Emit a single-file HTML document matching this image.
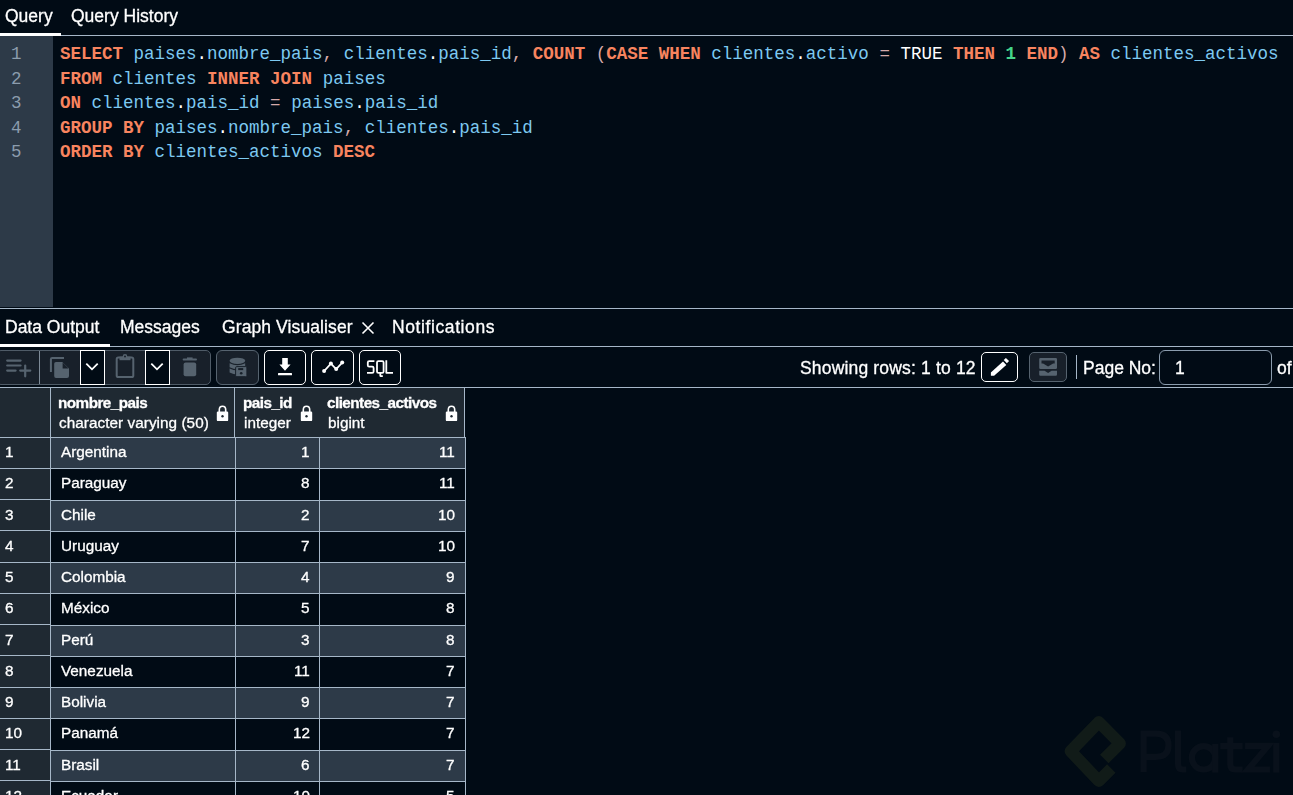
<!DOCTYPE html>
<html><head><meta charset="utf-8"><style>
html,body{margin:0;padding:0;}
body{width:1293px;height:795px;overflow:hidden;background:#010B15;position:relative;font-family:'Liberation Sans', sans-serif;}
b{font-weight:700;}
</style></head><body>
<div style="position:absolute;left:5px;top:5.44px;font-family:'Liberation Sans', sans-serif;font-size:17.5px;line-height:23px;color:#fff;font-weight:400;white-space:pre;-webkit-text-stroke:0.3px #fff;will-change:transform;">Query</div>
<div style="position:absolute;left:71px;top:5.44px;font-family:'Liberation Sans', sans-serif;font-size:17.5px;line-height:23px;color:#fff;font-weight:400;white-space:pre;-webkit-text-stroke:0.3px #fff;will-change:transform;">Query History</div>
<div style="position:absolute;left:0px;top:35px;width:1293px;height:1px;background:#A6B7C8;"></div>
<div style="position:absolute;left:0px;top:33px;width:61px;height:3px;background:#fff;"></div>
<div style="position:absolute;left:0px;top:36px;width:53px;height:271px;background:#2D3A48;"></div>
<div style="position:absolute;left:11px;top:43.34px;font-family:'Liberation Mono', monospace;font-size:17.5px;line-height:23px;color:#8B9CAD;font-weight:400;white-space:pre;">1</div>
<div style="position:absolute;left:60px;top:43.34px;font-family:'Liberation Mono', monospace;font-size:17.5px;line-height:23px;color:#7DC9F1;font-weight:400;white-space:pre;"><b style="color:#F8845F">SELECT</b> <span style="color:#7DC9F1">paises</span><span style="color:#ffffff">.</span><span style="color:#7DC9F1">nombre_pais</span><span style="color:#d6aaaa">,</span> <span style="color:#7DC9F1">clientes</span><span style="color:#ffffff">.</span><span style="color:#7DC9F1">pais_id</span><span style="color:#d6aaaa">,</span> <b style="color:#F8845F">COUNT</b> <span style="color:#d6aaaa">(</span><b style="color:#F8845F">CASE</b> <b style="color:#F8845F">WHEN</b> <span style="color:#7DC9F1">clientes</span><span style="color:#ffffff">.</span><span style="color:#7DC9F1">activo</span> <span style="color:#d6aaaa">=</span> <span style="color:#ffffff">TRUE</span> <b style="color:#F8845F">THEN</b> <b style="color:#45D48A">1</b> <b style="color:#F8845F">END</b><span style="color:#d6aaaa">)</span> <b style="color:#F8845F">AS</b> <span style="color:#7DC9F1">clientes_activos</span></div>
<div style="position:absolute;left:11px;top:67.84px;font-family:'Liberation Mono', monospace;font-size:17.5px;line-height:23px;color:#8B9CAD;font-weight:400;white-space:pre;">2</div>
<div style="position:absolute;left:60px;top:67.84px;font-family:'Liberation Mono', monospace;font-size:17.5px;line-height:23px;color:#7DC9F1;font-weight:400;white-space:pre;"><b style="color:#F8845F">FROM</b> <span style="color:#7DC9F1">clientes</span> <b style="color:#F8845F">INNER</b> <b style="color:#F8845F">JOIN</b> <span style="color:#7DC9F1">paises</span></div>
<div style="position:absolute;left:11px;top:92.34px;font-family:'Liberation Mono', monospace;font-size:17.5px;line-height:23px;color:#8B9CAD;font-weight:400;white-space:pre;">3</div>
<div style="position:absolute;left:60px;top:92.34px;font-family:'Liberation Mono', monospace;font-size:17.5px;line-height:23px;color:#7DC9F1;font-weight:400;white-space:pre;"><b style="color:#F8845F">ON</b> <span style="color:#7DC9F1">clientes</span><span style="color:#ffffff">.</span><span style="color:#7DC9F1">pais_id</span> <span style="color:#d6aaaa">=</span> <span style="color:#7DC9F1">paises</span><span style="color:#ffffff">.</span><span style="color:#7DC9F1">pais_id</span></div>
<div style="position:absolute;left:11px;top:116.84px;font-family:'Liberation Mono', monospace;font-size:17.5px;line-height:23px;color:#8B9CAD;font-weight:400;white-space:pre;">4</div>
<div style="position:absolute;left:60px;top:116.84px;font-family:'Liberation Mono', monospace;font-size:17.5px;line-height:23px;color:#7DC9F1;font-weight:400;white-space:pre;"><b style="color:#F8845F">GROUP</b> <b style="color:#F8845F">BY</b> <span style="color:#7DC9F1">paises</span><span style="color:#ffffff">.</span><span style="color:#7DC9F1">nombre_pais</span><span style="color:#d6aaaa">,</span> <span style="color:#7DC9F1">clientes</span><span style="color:#ffffff">.</span><span style="color:#7DC9F1">pais_id</span></div>
<div style="position:absolute;left:11px;top:141.34px;font-family:'Liberation Mono', monospace;font-size:17.5px;line-height:23px;color:#8B9CAD;font-weight:400;white-space:pre;">5</div>
<div style="position:absolute;left:60px;top:141.34px;font-family:'Liberation Mono', monospace;font-size:17.5px;line-height:23px;color:#7DC9F1;font-weight:400;white-space:pre;"><b style="color:#F8845F">ORDER</b> <b style="color:#F8845F">BY</b> <span style="color:#7DC9F1">clientes_activos</span> <b style="color:#F8845F">DESC</b></div>
<div style="position:absolute;left:0px;top:308px;width:1293px;height:1px;background:#A6B7C8;"></div>
<div style="position:absolute;left:5px;top:316.44px;font-family:'Liberation Sans', sans-serif;font-size:17.5px;line-height:23px;color:#fff;font-weight:400;white-space:pre;-webkit-text-stroke:0.3px #fff;will-change:transform;">Data Output</div>
<div style="position:absolute;left:120px;top:316.44px;font-family:'Liberation Sans', sans-serif;font-size:17.5px;line-height:23px;color:#fff;font-weight:400;white-space:pre;-webkit-text-stroke:0.3px #fff;will-change:transform;">Messages</div>
<div style="position:absolute;left:222px;top:316.44px;font-family:'Liberation Sans', sans-serif;font-size:17.5px;line-height:23px;color:#fff;font-weight:400;white-space:pre;-webkit-text-stroke:0.3px #fff;will-change:transform;letter-spacing:0.1px;">Graph Visualiser</div>
<div style="position:absolute;left:392px;top:316.44px;font-family:'Liberation Sans', sans-serif;font-size:17.5px;line-height:23px;color:#fff;font-weight:400;white-space:pre;-webkit-text-stroke:0.3px #fff;will-change:transform;letter-spacing:0.6px;">Notifications</div>
<svg style="position:absolute;left:361px;top:320.5px" width="14" height="14" viewBox="0 0 14 14"><path d="M1.5 1.5L12.5 12.5M12.5 1.5L1.5 12.5" stroke="#fff" stroke-width="1.6"/></svg>
<div style="position:absolute;left:0px;top:346px;width:1293px;height:1px;background:#A6B7C8;"></div>
<div style="position:absolute;left:0px;top:344px;width:110px;height:2.5px;background:#fff;"></div>
<div style="position:absolute;left:-4px;top:350px;width:215px;height:35px;background:#18202a;box-sizing:border-box;border:1px solid #4f5b67;border-radius:5px;"></div>
<div style="position:absolute;left:39px;top:351px;width:1px;height:33px;background:#7d8a97;"></div>
<div style="position:absolute;left:80px;top:350px;width:25px;height:35px;background:#010B15;box-sizing:border-box;border:1px solid #fff;"></div>
<div style="position:absolute;left:145px;top:350px;width:25px;height:35px;background:#010B15;box-sizing:border-box;border:1px solid #fff;"></div>
<svg style="position:absolute;left:84px;top:360px" width="16" height="14" viewBox="0 0 16 14"><path d="M2.3 3.6L8 9.3L13.7 3.6" fill="none" stroke="#fff" stroke-width="1.8"/></svg>
<svg style="position:absolute;left:149px;top:360px" width="16" height="14" viewBox="0 0 16 14"><path d="M2.3 3.6L8 9.3L13.7 3.6" fill="none" stroke="#fff" stroke-width="1.8"/></svg>
<svg style="position:absolute;left:0px;top:348px" width="40" height="40" viewBox="0 0 40 40"><g stroke="#56636f" stroke-width="2.2" stroke-linecap="round"><path d="M7.2 12.6H20.6M7.2 17.5H20.6M7.2 22.6H15.6M20.2 22.6H30.3M25.2 17.5V28.3"/></g></svg>
<svg style="position:absolute;left:40px;top:348px" width="40" height="40" viewBox="0 0 40 40"><path d="M10.9 24V11.3Q10.9 10 12.2 10H24" fill="none" stroke="#56636f" stroke-width="2"/><path d="M14.2 15.8Q14.2 14 16 14H22.3L29 20.6V28Q29 30 27 30H16Q14.2 30 14.2 28Z" fill="#56636f"/><path d="M22.6 14.4V20.5H28.6Z" fill="#18202a"/></svg>
<svg style="position:absolute;left:105px;top:348px" width="40" height="40" viewBox="0 0 40 40"><rect x="11.7" y="9.6" width="16.6" height="19.4" rx="1.6" fill="none" stroke="#56636f" stroke-width="2"/><rect x="14.5" y="8.6" width="11" height="3.6" fill="#56636f"/><circle cx="20" cy="8.4" r="2.3" fill="#56636f"/><circle cx="20" cy="8.4" r="1" fill="#18202a"/></svg>
<svg style="position:absolute;left:170px;top:348px" width="40" height="40" viewBox="0 0 40 40"><rect x="12.7" y="10.5" width="14.2" height="2" rx="0.8" fill="#56636f"/><rect x="17" y="9.4" width="5.6" height="2" fill="#56636f"/><rect x="13.6" y="14.4" width="12.6" height="13.8" rx="2" fill="#56636f"/></svg>
<div style="position:absolute;left:216px;top:350px;width:43px;height:35px;background:#18202a;box-sizing:border-box;border:1px solid #56636f;border-radius:6px;"></div>
<svg style="position:absolute;left:215px;top:348px" width="45" height="40" viewBox="0 0 45 40"><g fill="#56636f"><ellipse cx="22.4" cy="12.8" rx="7.8" ry="3.1"/><path d="M14.6 15.3Q22.4 19.3 30.2 15.3V19.2Q22.4 23.2 14.6 19.2Z"/><path d="M14.6 20.4Q22.4 24.4 30.2 20.4V24.6Q22.4 28.6 14.6 24.6Z"/></g><rect x="20.6" y="18.6" width="11.3" height="10.1" rx="1.2" fill="#56636f" stroke="#18202a" stroke-width="1"/><rect x="23.2" y="20.1" width="5" height="2" fill="#18202a"/><circle cx="26.2" cy="25.2" r="1.3" fill="#18202a"/></svg>
<div style="position:absolute;left:264px;top:350px;width:42px;height:35px;background:#010B15;box-sizing:border-box;border:1.2px solid #fff;border-radius:5px;"></div>
<svg style="position:absolute;left:260px;top:348px" width="50" height="40" viewBox="0 0 50 40"><path d="M22.2 10H27.8V16.6H30.6L25 22.8L19.4 16.6H22.2Z" fill="#fff"/><rect x="18" y="24.9" width="14" height="2.3" rx="0.5" fill="#fff"/></svg>
<div style="position:absolute;left:311px;top:350px;width:43px;height:35px;background:#010B15;box-sizing:border-box;border:1.2px solid #fff;border-radius:5px;"></div>
<svg style="position:absolute;left:308px;top:348px" width="50" height="40" viewBox="0 0 50 40"><path d="M16.1 23.1L22.9 15.6L28.2 21.1L34.2 14.6" fill="none" stroke="#fff" stroke-width="1.7" stroke-linejoin="round"/><circle cx="16.1" cy="23.1" r="2" fill="#fff"/><circle cx="22.9" cy="15.6" r="2" fill="#fff"/><circle cx="28.2" cy="21.1" r="2" fill="#fff"/><circle cx="34.2" cy="14.6" r="2" fill="#fff"/></svg>
<div style="position:absolute;left:359px;top:350px;width:42px;height:35px;background:#010B15;box-sizing:border-box;border:1.2px solid #fff;border-radius:5px;"></div>
<svg style="position:absolute;left:355px;top:348px" width="50" height="40" viewBox="0 0 50 40"><g fill="none" stroke="#fff" stroke-width="1.8" stroke-linejoin="round"><path d="M19.4 13.2H14.2Q12.8 13.2 12.8 14.6V17.2Q12.8 18.6 14.2 18.6H17.2Q18.6 18.6 18.6 20V23.4Q18.6 24.8 17.2 24.8H12"/><path d="M23.4 13.2H27.2Q28.6 13.2 28.6 14.6V23.4Q28.6 24.8 27.2 24.8H23.4Q22 24.8 22 23.4V14.6Q22 13.2 23.4 13.2Z"/><path d="M25.3 24.8V27.6Q25.3 28.2 25.9 28.2H27.8"/><path d="M31.3 12.2V24.8H38"/></g></svg>
<div style="position:absolute;left:800px;top:357.04px;font-family:'Liberation Sans', sans-serif;font-size:17.5px;line-height:23px;color:#fff;font-weight:400;white-space:pre;-webkit-text-stroke:0.3px #fff;will-change:transform;letter-spacing:0.17px;">Showing rows: 1 to 12</div>
<div style="position:absolute;left:981px;top:352px;width:37px;height:30px;background:#010B15;box-sizing:border-box;border:1.2px solid #fff;border-radius:5px;"></div>
<svg style="position:absolute;left:975px;top:348px" width="50" height="40" viewBox="0 0 50 40"><path d="M15.85 24.4L28.0 13.6L31.3 16.9L19.1 27.7H15.85Z" fill="#fff"/><path d="M30.9 9.9L34.1 13.1L31.9 15.3L28.7 12.1Z" fill="#fff"/></svg>
<div style="position:absolute;left:1029px;top:352px;width:38px;height:30px;background:#18202a;box-sizing:border-box;border:1px solid #56636f;border-radius:5px;"></div>
<svg style="position:absolute;left:1037px;top:356px" width="22" height="22" viewBox="0 0 22 22"><path d="M3.4 2H18.8Q20 2 20 3.2V11.7Q20 12.9 18.8 12.9H3.4Q2.2 12.9 2.2 11.7V3.2Q2.2 2 3.4 2Z M4.5 4.4V7.5H6.1L11.1 10.6L16.1 7.5H17.7V4.4Z" fill="#56636f" fill-rule="evenodd"/><path d="M2.2 14.8H7.6L11.1 17.1L14.6 14.8H20V18.6Q20 19.8 18.8 19.8H3.4Q2.2 19.8 2.2 18.6Z" fill="#56636f"/></svg>
<div style="position:absolute;left:1076px;top:355px;width:1px;height:24px;background:#A6B7C8;"></div>
<div style="position:absolute;left:1083px;top:357.04px;font-family:'Liberation Sans', sans-serif;font-size:17.5px;line-height:23px;color:#fff;font-weight:400;white-space:pre;-webkit-text-stroke:0.3px #fff;will-change:transform;">Page No:</div>
<div style="position:absolute;left:1159px;top:350px;width:113px;height:35px;background:#010B15;box-sizing:border-box;border:1px solid #8B9CAD;border-radius:6px;"></div>
<div style="position:absolute;left:1175px;top:357.04px;font-family:'Liberation Sans', sans-serif;font-size:17.5px;line-height:23px;color:#fff;font-weight:400;white-space:pre;-webkit-text-stroke:0.3px #fff;will-change:transform;">1</div>
<div style="position:absolute;left:1277px;top:357.04px;font-family:'Liberation Sans', sans-serif;font-size:17.5px;line-height:23px;color:#fff;font-weight:400;white-space:pre;-webkit-text-stroke:0.3px #fff;will-change:transform;">of</div>
<div style="position:absolute;left:0px;top:387px;width:1293px;height:1px;background:#A6B7C8;"></div>
<div style="position:absolute;left:0px;top:388px;width:465px;height:50px;background:#1F2932;"></div>
<div style="position:absolute;left:0px;top:437px;width:465px;height:1px;background:#A6B7C8;"></div>
<div style="position:absolute;left:50px;top:388px;width:1px;height:50px;background:#A6B7C8;"></div>
<div style="position:absolute;left:234px;top:388px;width:1px;height:50px;background:#A6B7C8;"></div>
<div style="position:absolute;left:464px;top:388px;width:1px;height:50px;background:#A6B7C8;"></div>
<div style="position:absolute;left:58px;top:393.20px;font-family:'Liberation Sans', sans-serif;font-size:15.3px;line-height:20px;color:#fff;font-weight:700;white-space:pre;-webkit-text-stroke:0.3px #fff;will-change:transform;letter-spacing:-0.55px;">nombre_pais</div>
<div style="position:absolute;left:59px;top:412.70px;font-family:'Liberation Sans', sans-serif;font-size:15.3px;line-height:20px;color:#fff;font-weight:400;white-space:pre;-webkit-text-stroke:0.3px #fff;will-change:transform;letter-spacing:0.05px;">character varying (50)</div>
<div style="position:absolute;left:243px;top:393.20px;font-family:'Liberation Sans', sans-serif;font-size:15.3px;line-height:20px;color:#fff;font-weight:700;white-space:pre;-webkit-text-stroke:0.3px #fff;will-change:transform;letter-spacing:-0.55px;">pais_id</div>
<div style="position:absolute;left:244px;top:412.70px;font-family:'Liberation Sans', sans-serif;font-size:15.3px;line-height:20px;color:#fff;font-weight:400;white-space:pre;-webkit-text-stroke:0.3px #fff;will-change:transform;">integer</div>
<div style="position:absolute;left:327px;top:393.20px;font-family:'Liberation Sans', sans-serif;font-size:15.3px;line-height:20px;color:#fff;font-weight:700;white-space:pre;-webkit-text-stroke:0.3px #fff;will-change:transform;letter-spacing:-0.55px;">clientes_activos</div>
<div style="position:absolute;left:328px;top:412.70px;font-family:'Liberation Sans', sans-serif;font-size:15.3px;line-height:20px;color:#fff;font-weight:400;white-space:pre;-webkit-text-stroke:0.3px #fff;will-change:transform;">bigint</div>
<svg style="position:absolute;left:215.5px;top:405px" width="13" height="17" viewBox="0 0 13 17"><path d="M3.3 7V4.8Q3.3 1.3 6.5 1.3Q9.7 1.3 9.7 4.8V7" fill="none" stroke="#fff" stroke-width="1.6"/><rect x="0.8" y="6.5" width="11.4" height="9.6" rx="1.2" fill="#fff"/><circle cx="6.5" cy="11.2" r="1.2" fill="#1F2932"/></svg>
<svg style="position:absolute;left:300px;top:405px" width="13" height="17" viewBox="0 0 13 17"><path d="M3.3 7V4.8Q3.3 1.3 6.5 1.3Q9.7 1.3 9.7 4.8V7" fill="none" stroke="#fff" stroke-width="1.6"/><rect x="0.8" y="6.5" width="11.4" height="9.6" rx="1.2" fill="#fff"/><circle cx="6.5" cy="11.2" r="1.2" fill="#1F2932"/></svg>
<svg style="position:absolute;left:444.5px;top:405px" width="13" height="17" viewBox="0 0 13 17"><path d="M3.3 7V4.8Q3.3 1.3 6.5 1.3Q9.7 1.3 9.7 4.8V7" fill="none" stroke="#fff" stroke-width="1.6"/><rect x="0.8" y="6.5" width="11.4" height="9.6" rx="1.2" fill="#fff"/><circle cx="6.5" cy="11.2" r="1.2" fill="#1F2932"/></svg>
<div style="position:absolute;left:0px;top:438px;width:50px;height:30px;background:#1F2932;"></div>
<div style="position:absolute;left:0px;top:468px;width:50px;height:1px;background:#A6B7C8;"></div>
<div style="position:absolute;left:51px;top:438px;width:414px;height:30px;background:#2D3A48;"></div>
<div style="position:absolute;left:51px;top:468px;width:415px;height:1px;background:#A6B7C8;"></div>
<div style="position:absolute;left:5px;top:441.90px;font-family:'Liberation Sans', sans-serif;font-size:15.3px;line-height:20px;color:#fff;font-weight:400;white-space:pre;-webkit-text-stroke:0.3px #fff;will-change:transform;">1</div>
<div style="position:absolute;left:61px;top:441.90px;font-family:'Liberation Sans', sans-serif;font-size:15.3px;line-height:20px;color:#fff;font-weight:400;white-space:pre;-webkit-text-stroke:0.3px #fff;will-change:transform;">Argentina</div>
<div style="position:absolute;right:983px;top:441.90px;font-family:'Liberation Sans', sans-serif;font-size:15.3px;line-height:20px;color:#fff;font-weight:400;white-space:pre;-webkit-text-stroke:0.3px #fff;will-change:transform;">1</div>
<div style="position:absolute;right:838px;top:441.90px;font-family:'Liberation Sans', sans-serif;font-size:15.3px;line-height:20px;color:#fff;font-weight:400;white-space:pre;-webkit-text-stroke:0.3px #fff;will-change:transform;">11</div>
<div style="position:absolute;left:0px;top:469px;width:50px;height:30px;background:#1F2932;"></div>
<div style="position:absolute;left:0px;top:499px;width:50px;height:1px;background:#A6B7C8;"></div>
<div style="position:absolute;left:51px;top:469px;width:414px;height:31px;background:#010B15;"></div>
<div style="position:absolute;left:51px;top:500px;width:415px;height:1px;background:#A6B7C8;"></div>
<div style="position:absolute;left:5px;top:472.90px;font-family:'Liberation Sans', sans-serif;font-size:15.3px;line-height:20px;color:#fff;font-weight:400;white-space:pre;-webkit-text-stroke:0.3px #fff;will-change:transform;">2</div>
<div style="position:absolute;left:61px;top:472.90px;font-family:'Liberation Sans', sans-serif;font-size:15.3px;line-height:20px;color:#fff;font-weight:400;white-space:pre;-webkit-text-stroke:0.3px #fff;will-change:transform;">Paraguay</div>
<div style="position:absolute;right:983px;top:472.90px;font-family:'Liberation Sans', sans-serif;font-size:15.3px;line-height:20px;color:#fff;font-weight:400;white-space:pre;-webkit-text-stroke:0.3px #fff;will-change:transform;">8</div>
<div style="position:absolute;right:838px;top:472.90px;font-family:'Liberation Sans', sans-serif;font-size:15.3px;line-height:20px;color:#fff;font-weight:400;white-space:pre;-webkit-text-stroke:0.3px #fff;will-change:transform;">11</div>
<div style="position:absolute;left:0px;top:500px;width:50px;height:30px;background:#1F2932;"></div>
<div style="position:absolute;left:0px;top:530px;width:50px;height:1px;background:#A6B7C8;"></div>
<div style="position:absolute;left:51px;top:501px;width:414px;height:30px;background:#2D3A48;"></div>
<div style="position:absolute;left:51px;top:531px;width:415px;height:1px;background:#A6B7C8;"></div>
<div style="position:absolute;left:5px;top:504.90px;font-family:'Liberation Sans', sans-serif;font-size:15.3px;line-height:20px;color:#fff;font-weight:400;white-space:pre;-webkit-text-stroke:0.3px #fff;will-change:transform;">3</div>
<div style="position:absolute;left:61px;top:504.90px;font-family:'Liberation Sans', sans-serif;font-size:15.3px;line-height:20px;color:#fff;font-weight:400;white-space:pre;-webkit-text-stroke:0.3px #fff;will-change:transform;">Chile</div>
<div style="position:absolute;right:983px;top:504.90px;font-family:'Liberation Sans', sans-serif;font-size:15.3px;line-height:20px;color:#fff;font-weight:400;white-space:pre;-webkit-text-stroke:0.3px #fff;will-change:transform;">2</div>
<div style="position:absolute;right:838px;top:504.90px;font-family:'Liberation Sans', sans-serif;font-size:15.3px;line-height:20px;color:#fff;font-weight:400;white-space:pre;-webkit-text-stroke:0.3px #fff;will-change:transform;">10</div>
<div style="position:absolute;left:0px;top:531px;width:50px;height:31px;background:#1F2932;"></div>
<div style="position:absolute;left:0px;top:562px;width:50px;height:1px;background:#A6B7C8;"></div>
<div style="position:absolute;left:51px;top:532px;width:414px;height:30px;background:#010B15;"></div>
<div style="position:absolute;left:51px;top:562px;width:415px;height:1px;background:#A6B7C8;"></div>
<div style="position:absolute;left:5px;top:535.90px;font-family:'Liberation Sans', sans-serif;font-size:15.3px;line-height:20px;color:#fff;font-weight:400;white-space:pre;-webkit-text-stroke:0.3px #fff;will-change:transform;">4</div>
<div style="position:absolute;left:61px;top:535.90px;font-family:'Liberation Sans', sans-serif;font-size:15.3px;line-height:20px;color:#fff;font-weight:400;white-space:pre;-webkit-text-stroke:0.3px #fff;will-change:transform;">Uruguay</div>
<div style="position:absolute;right:983px;top:535.90px;font-family:'Liberation Sans', sans-serif;font-size:15.3px;line-height:20px;color:#fff;font-weight:400;white-space:pre;-webkit-text-stroke:0.3px #fff;will-change:transform;">7</div>
<div style="position:absolute;right:838px;top:535.90px;font-family:'Liberation Sans', sans-serif;font-size:15.3px;line-height:20px;color:#fff;font-weight:400;white-space:pre;-webkit-text-stroke:0.3px #fff;will-change:transform;">10</div>
<div style="position:absolute;left:0px;top:563px;width:50px;height:30px;background:#1F2932;"></div>
<div style="position:absolute;left:0px;top:593px;width:50px;height:1px;background:#A6B7C8;"></div>
<div style="position:absolute;left:51px;top:563px;width:414px;height:30px;background:#2D3A48;"></div>
<div style="position:absolute;left:51px;top:593px;width:415px;height:1px;background:#A6B7C8;"></div>
<div style="position:absolute;left:5px;top:566.90px;font-family:'Liberation Sans', sans-serif;font-size:15.3px;line-height:20px;color:#fff;font-weight:400;white-space:pre;-webkit-text-stroke:0.3px #fff;will-change:transform;">5</div>
<div style="position:absolute;left:61px;top:566.90px;font-family:'Liberation Sans', sans-serif;font-size:15.3px;line-height:20px;color:#fff;font-weight:400;white-space:pre;-webkit-text-stroke:0.3px #fff;will-change:transform;">Colombia</div>
<div style="position:absolute;right:983px;top:566.90px;font-family:'Liberation Sans', sans-serif;font-size:15.3px;line-height:20px;color:#fff;font-weight:400;white-space:pre;-webkit-text-stroke:0.3px #fff;will-change:transform;">4</div>
<div style="position:absolute;right:838px;top:566.90px;font-family:'Liberation Sans', sans-serif;font-size:15.3px;line-height:20px;color:#fff;font-weight:400;white-space:pre;-webkit-text-stroke:0.3px #fff;will-change:transform;">9</div>
<div style="position:absolute;left:0px;top:594px;width:50px;height:30px;background:#1F2932;"></div>
<div style="position:absolute;left:0px;top:624px;width:50px;height:1px;background:#A6B7C8;"></div>
<div style="position:absolute;left:51px;top:594px;width:414px;height:31px;background:#010B15;"></div>
<div style="position:absolute;left:51px;top:625px;width:415px;height:1px;background:#A6B7C8;"></div>
<div style="position:absolute;left:5px;top:597.90px;font-family:'Liberation Sans', sans-serif;font-size:15.3px;line-height:20px;color:#fff;font-weight:400;white-space:pre;-webkit-text-stroke:0.3px #fff;will-change:transform;">6</div>
<div style="position:absolute;left:61px;top:597.90px;font-family:'Liberation Sans', sans-serif;font-size:15.3px;line-height:20px;color:#fff;font-weight:400;white-space:pre;-webkit-text-stroke:0.3px #fff;will-change:transform;">México</div>
<div style="position:absolute;right:983px;top:597.90px;font-family:'Liberation Sans', sans-serif;font-size:15.3px;line-height:20px;color:#fff;font-weight:400;white-space:pre;-webkit-text-stroke:0.3px #fff;will-change:transform;">5</div>
<div style="position:absolute;right:838px;top:597.90px;font-family:'Liberation Sans', sans-serif;font-size:15.3px;line-height:20px;color:#fff;font-weight:400;white-space:pre;-webkit-text-stroke:0.3px #fff;will-change:transform;">8</div>
<div style="position:absolute;left:0px;top:625px;width:50px;height:30px;background:#1F2932;"></div>
<div style="position:absolute;left:0px;top:655px;width:50px;height:1px;background:#A6B7C8;"></div>
<div style="position:absolute;left:51px;top:626px;width:414px;height:30px;background:#2D3A48;"></div>
<div style="position:absolute;left:51px;top:656px;width:415px;height:1px;background:#A6B7C8;"></div>
<div style="position:absolute;left:5px;top:629.90px;font-family:'Liberation Sans', sans-serif;font-size:15.3px;line-height:20px;color:#fff;font-weight:400;white-space:pre;-webkit-text-stroke:0.3px #fff;will-change:transform;">7</div>
<div style="position:absolute;left:61px;top:629.90px;font-family:'Liberation Sans', sans-serif;font-size:15.3px;line-height:20px;color:#fff;font-weight:400;white-space:pre;-webkit-text-stroke:0.3px #fff;will-change:transform;">Perú</div>
<div style="position:absolute;right:983px;top:629.90px;font-family:'Liberation Sans', sans-serif;font-size:15.3px;line-height:20px;color:#fff;font-weight:400;white-space:pre;-webkit-text-stroke:0.3px #fff;will-change:transform;">3</div>
<div style="position:absolute;right:838px;top:629.90px;font-family:'Liberation Sans', sans-serif;font-size:15.3px;line-height:20px;color:#fff;font-weight:400;white-space:pre;-webkit-text-stroke:0.3px #fff;will-change:transform;">8</div>
<div style="position:absolute;left:0px;top:656px;width:50px;height:31px;background:#1F2932;"></div>
<div style="position:absolute;left:0px;top:687px;width:50px;height:1px;background:#A6B7C8;"></div>
<div style="position:absolute;left:51px;top:657px;width:414px;height:30px;background:#010B15;"></div>
<div style="position:absolute;left:51px;top:687px;width:415px;height:1px;background:#A6B7C8;"></div>
<div style="position:absolute;left:5px;top:660.90px;font-family:'Liberation Sans', sans-serif;font-size:15.3px;line-height:20px;color:#fff;font-weight:400;white-space:pre;-webkit-text-stroke:0.3px #fff;will-change:transform;">8</div>
<div style="position:absolute;left:61px;top:660.90px;font-family:'Liberation Sans', sans-serif;font-size:15.3px;line-height:20px;color:#fff;font-weight:400;white-space:pre;-webkit-text-stroke:0.3px #fff;will-change:transform;">Venezuela</div>
<div style="position:absolute;right:983px;top:660.90px;font-family:'Liberation Sans', sans-serif;font-size:15.3px;line-height:20px;color:#fff;font-weight:400;white-space:pre;-webkit-text-stroke:0.3px #fff;will-change:transform;">11</div>
<div style="position:absolute;right:838px;top:660.90px;font-family:'Liberation Sans', sans-serif;font-size:15.3px;line-height:20px;color:#fff;font-weight:400;white-space:pre;-webkit-text-stroke:0.3px #fff;will-change:transform;">7</div>
<div style="position:absolute;left:0px;top:688px;width:50px;height:30px;background:#1F2932;"></div>
<div style="position:absolute;left:0px;top:718px;width:50px;height:1px;background:#A6B7C8;"></div>
<div style="position:absolute;left:51px;top:688px;width:414px;height:30px;background:#2D3A48;"></div>
<div style="position:absolute;left:51px;top:718px;width:415px;height:1px;background:#A6B7C8;"></div>
<div style="position:absolute;left:5px;top:691.90px;font-family:'Liberation Sans', sans-serif;font-size:15.3px;line-height:20px;color:#fff;font-weight:400;white-space:pre;-webkit-text-stroke:0.3px #fff;will-change:transform;">9</div>
<div style="position:absolute;left:61px;top:691.90px;font-family:'Liberation Sans', sans-serif;font-size:15.3px;line-height:20px;color:#fff;font-weight:400;white-space:pre;-webkit-text-stroke:0.3px #fff;will-change:transform;">Bolivia</div>
<div style="position:absolute;right:983px;top:691.90px;font-family:'Liberation Sans', sans-serif;font-size:15.3px;line-height:20px;color:#fff;font-weight:400;white-space:pre;-webkit-text-stroke:0.3px #fff;will-change:transform;">9</div>
<div style="position:absolute;right:838px;top:691.90px;font-family:'Liberation Sans', sans-serif;font-size:15.3px;line-height:20px;color:#fff;font-weight:400;white-space:pre;-webkit-text-stroke:0.3px #fff;will-change:transform;">7</div>
<div style="position:absolute;left:0px;top:719px;width:50px;height:30px;background:#1F2932;"></div>
<div style="position:absolute;left:0px;top:749px;width:50px;height:1px;background:#A6B7C8;"></div>
<div style="position:absolute;left:51px;top:719px;width:414px;height:31px;background:#010B15;"></div>
<div style="position:absolute;left:51px;top:750px;width:415px;height:1px;background:#A6B7C8;"></div>
<div style="position:absolute;left:5px;top:722.90px;font-family:'Liberation Sans', sans-serif;font-size:15.3px;line-height:20px;color:#fff;font-weight:400;white-space:pre;-webkit-text-stroke:0.3px #fff;will-change:transform;">10</div>
<div style="position:absolute;left:61px;top:722.90px;font-family:'Liberation Sans', sans-serif;font-size:15.3px;line-height:20px;color:#fff;font-weight:400;white-space:pre;-webkit-text-stroke:0.3px #fff;will-change:transform;">Panamá</div>
<div style="position:absolute;right:983px;top:722.90px;font-family:'Liberation Sans', sans-serif;font-size:15.3px;line-height:20px;color:#fff;font-weight:400;white-space:pre;-webkit-text-stroke:0.3px #fff;will-change:transform;">12</div>
<div style="position:absolute;right:838px;top:722.90px;font-family:'Liberation Sans', sans-serif;font-size:15.3px;line-height:20px;color:#fff;font-weight:400;white-space:pre;-webkit-text-stroke:0.3px #fff;will-change:transform;">7</div>
<div style="position:absolute;left:0px;top:750px;width:50px;height:30px;background:#1F2932;"></div>
<div style="position:absolute;left:0px;top:780px;width:50px;height:1px;background:#A6B7C8;"></div>
<div style="position:absolute;left:51px;top:751px;width:414px;height:30px;background:#2D3A48;"></div>
<div style="position:absolute;left:51px;top:781px;width:415px;height:1px;background:#A6B7C8;"></div>
<div style="position:absolute;left:5px;top:754.90px;font-family:'Liberation Sans', sans-serif;font-size:15.3px;line-height:20px;color:#fff;font-weight:400;white-space:pre;-webkit-text-stroke:0.3px #fff;will-change:transform;">11</div>
<div style="position:absolute;left:61px;top:754.90px;font-family:'Liberation Sans', sans-serif;font-size:15.3px;line-height:20px;color:#fff;font-weight:400;white-space:pre;-webkit-text-stroke:0.3px #fff;will-change:transform;">Brasil</div>
<div style="position:absolute;right:983px;top:754.90px;font-family:'Liberation Sans', sans-serif;font-size:15.3px;line-height:20px;color:#fff;font-weight:400;white-space:pre;-webkit-text-stroke:0.3px #fff;will-change:transform;">6</div>
<div style="position:absolute;right:838px;top:754.90px;font-family:'Liberation Sans', sans-serif;font-size:15.3px;line-height:20px;color:#fff;font-weight:400;white-space:pre;-webkit-text-stroke:0.3px #fff;will-change:transform;">7</div>
<div style="position:absolute;left:0px;top:781px;width:50px;height:31px;background:#1F2932;"></div>
<div style="position:absolute;left:0px;top:812px;width:50px;height:1px;background:#A6B7C8;"></div>
<div style="position:absolute;left:51px;top:782px;width:414px;height:30px;background:#010B15;"></div>
<div style="position:absolute;left:51px;top:812px;width:415px;height:1px;background:#A6B7C8;"></div>
<div style="position:absolute;left:5px;top:785.90px;font-family:'Liberation Sans', sans-serif;font-size:15.3px;line-height:20px;color:#fff;font-weight:400;white-space:pre;-webkit-text-stroke:0.3px #fff;will-change:transform;">12</div>
<div style="position:absolute;left:61px;top:785.90px;font-family:'Liberation Sans', sans-serif;font-size:15.3px;line-height:20px;color:#fff;font-weight:400;white-space:pre;-webkit-text-stroke:0.3px #fff;will-change:transform;">Ecuador</div>
<div style="position:absolute;right:983px;top:785.90px;font-family:'Liberation Sans', sans-serif;font-size:15.3px;line-height:20px;color:#fff;font-weight:400;white-space:pre;-webkit-text-stroke:0.3px #fff;will-change:transform;">10</div>
<div style="position:absolute;right:838px;top:785.90px;font-family:'Liberation Sans', sans-serif;font-size:15.3px;line-height:20px;color:#fff;font-weight:400;white-space:pre;-webkit-text-stroke:0.3px #fff;will-change:transform;">5</div>
<div style="position:absolute;left:50px;top:437px;width:1px;height:358px;background:#A6B7C8;"></div>
<div style="position:absolute;left:235px;top:437px;width:1px;height:358px;background:#A6B7C8;"></div>
<div style="position:absolute;left:319px;top:437px;width:1px;height:358px;background:#A6B7C8;"></div>
<div style="position:absolute;left:465px;top:437px;width:1px;height:358px;background:#A6B7C8;"></div>
<svg style="position:absolute;left:0;top:0" width="1293" height="795" viewBox="0 0 1293 795"><path d="M1104.3 759L1119.9 743.4L1098.8 722.1L1070.6 751.2L1098.8 780.9L1111.3 768.5" fill="none" stroke="#111b18" stroke-width="12" stroke-linejoin="round"/><g fill="none" stroke="#09111b" stroke-width="6.2"><path d="M1143.6 772V733.6H1156Q1168.5 733.6 1168.5 745.3Q1168.5 756.8 1156 756.8H1143.6"/><path d="M1178.1 730.5V764.5Q1178.1 769.5 1183 769.5H1186.3"/><ellipse cx="1203.6" cy="757.8" rx="11.7" ry="11.7"/><path d="M1215.3 744V772.6"/><path d="M1230.3 737.3V764.5Q1230.3 769.5 1235.5 769.5H1242.6M1220.3 746.2H1242.6"/><path d="M1245.1 745.9H1268L1248 769.5H1269.9"/><path d="M1276.3 743V772.6"/></g><circle cx="1276.3" cy="734.2" r="3.8" fill="#09111b"/></svg>
</body></html>
